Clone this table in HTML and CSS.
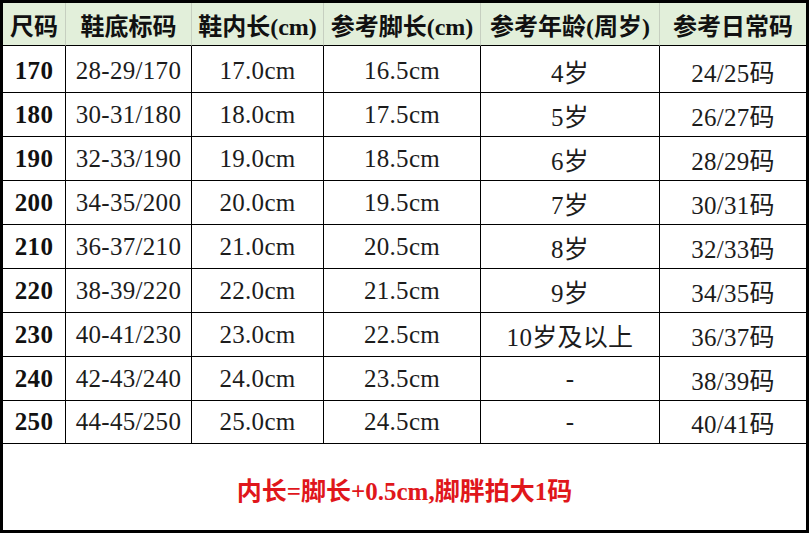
FILE: index.html
```html
<!DOCTYPE html>
<html lang="zh">
<head>
<meta charset="utf-8">
<title>尺码表</title>
<link rel="stylesheet" href="styles.css">
</head>
<body>
<div class="chart">
  <div class="hd">尺码</div>
  <div class="hd">鞋底标码</div>
  <div class="hd">鞋内长(cm)</div>
  <div class="hd">参考脚长(cm)</div>
  <div class="hd">参考年龄(周岁)</div>
  <div class="hd last">参考日常码</div>

  <div class="c size r1">170</div><div class="c r1">28-29/170</div><div class="c r1">17.0cm</div><div class="c r1">16.5cm</div><div class="c r1">4岁</div><div class="c last r1">24/25码</div>
  <div class="c size">180</div><div class="c">30-31/180</div><div class="c">18.0cm</div><div class="c">17.5cm</div><div class="c">5岁</div><div class="c last">26/27码</div>
  <div class="c size">190</div><div class="c">32-33/190</div><div class="c">19.0cm</div><div class="c">18.5cm</div><div class="c">6岁</div><div class="c last">28/29码</div>
  <div class="c size">200</div><div class="c">34-35/200</div><div class="c">20.0cm</div><div class="c">19.5cm</div><div class="c">7岁</div><div class="c last">30/31码</div>
  <div class="c size">210</div><div class="c">36-37/210</div><div class="c">21.0cm</div><div class="c">20.5cm</div><div class="c">8岁</div><div class="c last">32/33码</div>
  <div class="c size">220</div><div class="c">38-39/220</div><div class="c">22.0cm</div><div class="c">21.5cm</div><div class="c">9岁</div><div class="c last">34/35码</div>
  <div class="c size">230</div><div class="c">40-41/230</div><div class="c">23.0cm</div><div class="c">22.5cm</div><div class="c">10岁及以上</div><div class="c last">36/37码</div>
  <div class="c size">240</div><div class="c">42-43/240</div><div class="c">24.0cm</div><div class="c">23.5cm</div><div class="c">-</div><div class="c last">38/39码</div>
  <div class="c size">250</div><div class="c">44-45/250</div><div class="c">25.0cm</div><div class="c">24.5cm</div><div class="c">-</div><div class="c last">40/41码</div>

  <div class="note">内长=脚长+0.5cm,脚胖拍大1码</div>
</div>
</body>
</html>
```
FILE: styles.css
```css
html, body {
  margin: 0;
  padding: 0;
  background: #ffffff;
}
.chart {
  width: 809px;
  height: 533px;
  box-sizing: border-box;
  border: 3px solid #000;
  display: grid;
  grid-template-columns: 63px 126px 132px 157px 179px 146px;
  grid-template-rows: 43px 47px repeat(7, 44px) 43px 86px;
  font-family: "Liberation Serif", "Noto Sans CJK SC", serif;
  font-size: 25px;
  color: #1c1c1c;
}
.hd {
  background: #e2efda;
  font-weight: bold;
  font-size: 24px;
  color: #111;
  display: flex;
  align-items: center;
  justify-content: center;
  white-space: nowrap;
  box-sizing: border-box;
  border-right: 1px solid #c6cfc0;
  border-bottom: 1px solid #000;
  padding-top: 1px;
}
.c {
  display: flex;
  align-items: center;
  justify-content: center;
  white-space: nowrap;
  box-sizing: border-box;
  border-right: 1px solid #000;
  border-bottom: 1px solid #000;
  letter-spacing: 0.3px;
}
.r1 {
  padding-top: 4px;
}
.last {
  border-right: none;
}
.size {
  font-weight: bold;
  color: #111;
}
.note {
  grid-column: 1 / -1;
  display: flex;
  align-items: center;
  justify-content: center;
  color: #e0161b;
  font-weight: bold;
  font-size: 25px;
  padding-top: 4px;
}
```
